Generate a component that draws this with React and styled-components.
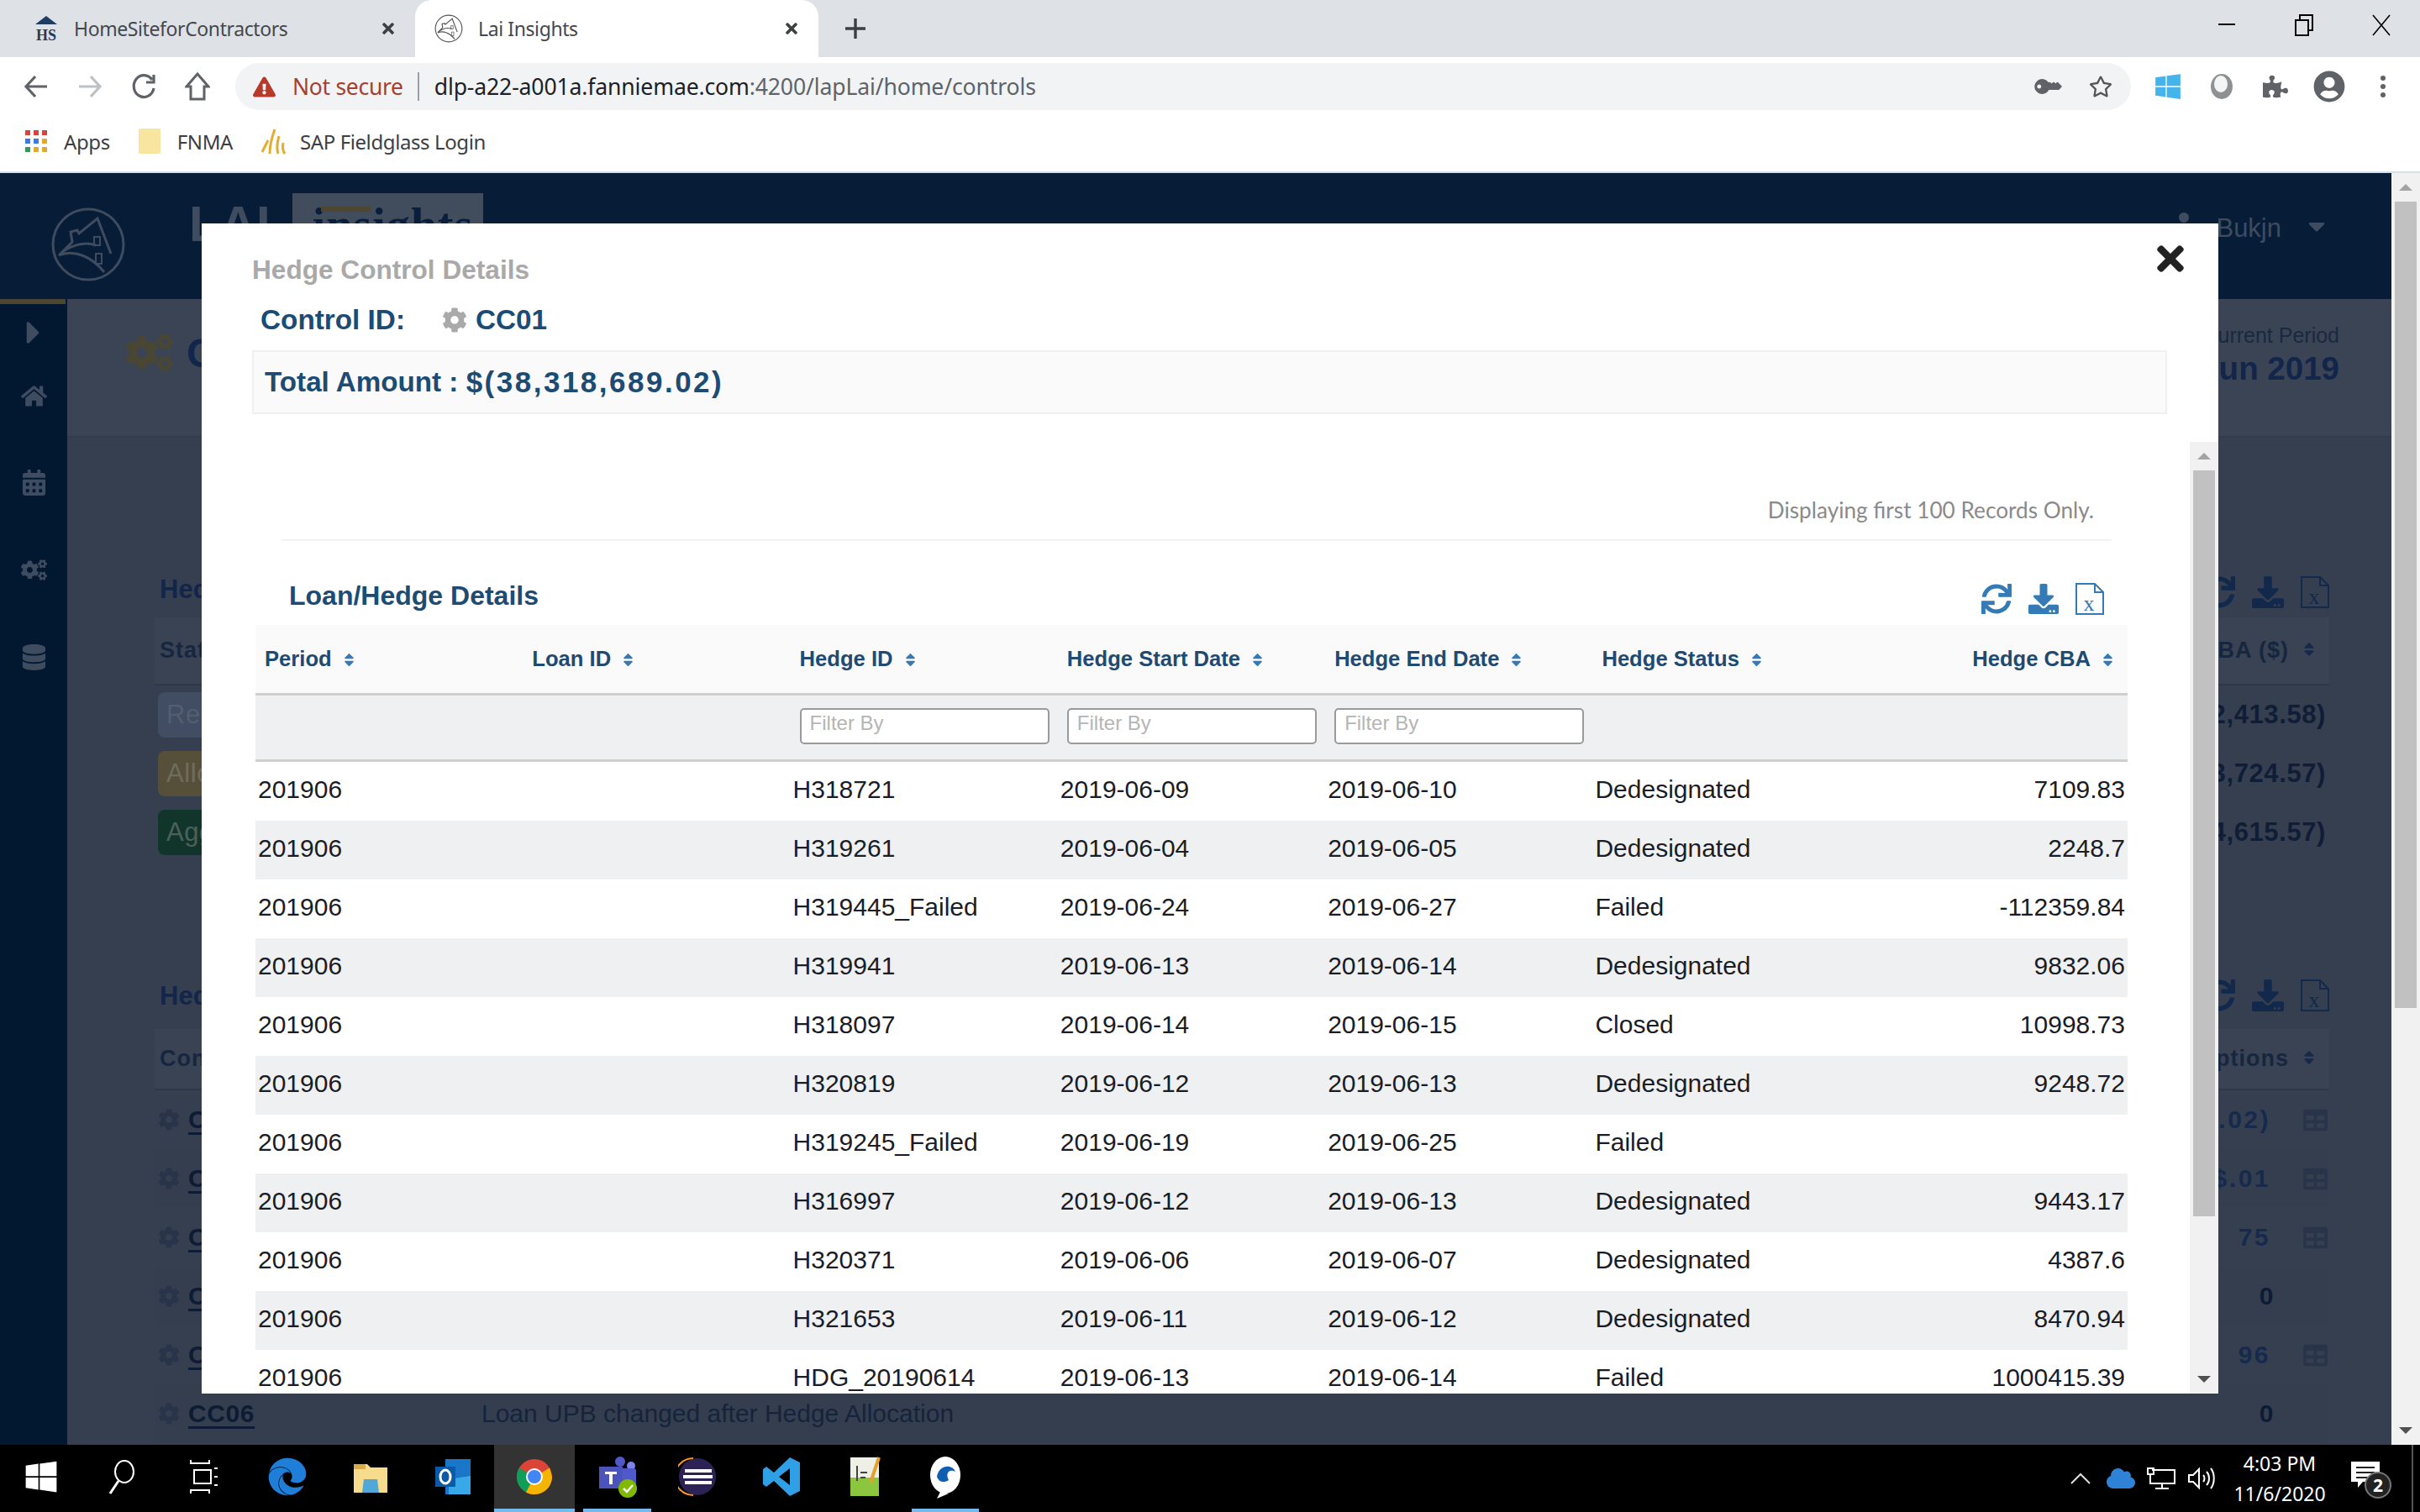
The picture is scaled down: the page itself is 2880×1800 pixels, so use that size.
import React from 'react';
import styled, { createGlobalStyle } from 'styled-components';
import {
  FaCalendarAlt,
  FaCaretDown,
  FaCaretRight,
  FaCloud,
  FaCog,
  FaCogs,
  FaDatabase,
  FaDownload,
  FaEdge,
  FaExclamationTriangle,
  FaHome,
  FaKey,
  FaPuzzlePiece,
  FaRegStar,
  FaSort,
  FaSync,
  FaTable,
  FaTimes,
  FaUser,
  FaUserCircle,
  FaWindows,
} from 'react-icons/fa';

const GlobalStyle = createGlobalStyle`
  html, body { margin: 0; padding: 0; background: #000; }
  * { box-sizing: border-box; }
  body { font-family: "Liberation Sans", Arial, sans-serif; }
`;

const Screen = styled.div`
  width: 2880px;
  height: 1800px;
  display: flex;
  flex-direction: column;
  overflow: hidden;
`;

/* browser chrome */
const TabStrip = styled.div`
  height: 68px;
  background: #dee1e6;
  display: flex;
  align-items: stretch;
  font-family: "Noto Sans", sans-serif;
`;

const Tab = styled.div`
  width: ${(p) => p.$width}px;
  padding: 0 22px 0 ${(p) => p.$pad}px;
  display: flex;
  align-items: center;
  gap: 18px;
  color: #45484d;
  font-size: 23px;
  background: ${(p) => (p.$active ? '#fff' : 'transparent')};
  border-radius: ${(p) => (p.$active ? '20px 20px 0 0' : '0')};
`;

const TabTitle = styled.span`
  flex: 1;
  letter-spacing: -0.4px;
  white-space: nowrap;
`;

const NewTab = styled.div`
  width: 88px;
  display: flex;
  align-items: center;
  justify-content: center;
  color: #3c4043;
`;

const WindowButtons = styled.div`
  margin-left: auto;
  display: flex;
`;

const WindowButton = styled.div`
  width: 92px;
  display: flex;
  justify-content: center;
  padding-top: 17px;
`;

const Toolbar = styled.div`
  height: 70px;
  padding-left: 11px;
  background: #fff;
  display: flex;
  align-items: center;
`;

const ToolButton = styled.div`
  width: 64px;
  height: 56px;
  display: flex;
  align-items: center;
  justify-content: center;
  flex: none;
  color: ${(p) => p.$color || '#5f6368'};
  font-size: ${(p) => p.$size || 30}px;
`;

const Omnibox = styled.div`
  width: 2256px;
  height: 56px;
  margin: 0 12px 0 13px;
  padding: 0 4px 0 21px;
  flex: none;
  background: #f1f3f4;
  border-radius: 28px;
  display: flex;
  align-items: center;
`;

const NotSecure = styled.span`
  margin-left: 20px;
  padding-right: 17px;
  border-right: 2px solid #9aa0a6;
  color: #a8402f;
  font-size: 26.5px;
  line-height: 34px;
  font-family: "Noto Sans", sans-serif;
  letter-spacing: -0.3px;
`;

const Url = styled.span`
  margin-left: 18px;
  flex: 1;
  font-size: 26.6px;
  font-family: "Noto Sans", sans-serif;
  letter-spacing: -0.15px;
  color: #5f6368;
  b { font-weight: 400; color: #202124; }
`;

const BookmarkBar = styled.div`
  height: 68px;
  padding: 0 0 6px 30px;
  background: #fff;
  border-bottom: 2px solid #d5dfe9;
  display: flex;
  align-items: center;
  font-family: "Noto Sans", sans-serif;
  font-size: 24px;
  letter-spacing: -0.4px;
  color: #3c4043;
`;

const Bookmark = styled.div`
  display: flex;
  align-items: center;
  gap: ${(p) => p.$gap}px;
  margin-right: ${(p) => p.$after}px;
`;

/* app behind the dialog */
const Main = styled.div`
  position: relative;
  flex: 1;
  min-height: 0;
  display: flex;
`;

const AppColumn = styled.div`
  flex: 1;
  min-width: 0;
  display: flex;
  flex-direction: column;
`;

const AppHeader = styled.header`
  height: 150px;
  flex: none;
  padding: 0 73px 0 60px;
  background: #071c36;
  display: flex;
  color: #3f4b5e;
`;

const Brand = styled.div`
  display: flex;
  align-items: flex-start;
  padding-top: 40px;
`;

const BrandName = styled.div`
  margin: -14px 0 0 75px;
  font-size: 60px;
  font-weight: 700;
  line-height: 70px;
`;

const BrandBox = styled.div`
  position: relative;
  width: 227px;
  height: 60px;
  margin: -16px 0 0 26px;
  padding-left: 24px;
  background: #414c5c;
  font-family: "Liberation Serif", serif;
  font-size: 56px;
  font-weight: 700;
  line-height: 76px;
  letter-spacing: 1px;
  color: #081f3b;
  &::before {
    content: '';
    position: absolute;
    left: 34px;
    top: 16px;
    width: 59px;
    height: 6px;
    background: #4d4732;
  }
`;

const UserMenu = styled.div`
  margin-left: auto;
  padding-top: 47px;
  display: flex;
  align-items: flex-start;
  gap: 26px;
  font-size: 31px;
  line-height: 38px;
`;

const Body = styled.div`
  flex: 1;
  min-height: 0;
  display: flex;
`;

const SideBar = styled.nav`
  width: 80px;
  flex: none;
  background: #021730;
  color: #3f4c60;
  display: flex;
  flex-direction: column;
  align-items: center;
  &::before {
    content: '';
    align-self: stretch;
    height: 6px;
    margin-right: 2px;
    background: #4d4732;
  }
`;

const SideItem = styled.div`
  height: ${(p) => p.$h || 104}px;
  margin-top: ${(p) => p.$top || 0}px;
  display: flex;
  align-items: center;
  justify-content: center;
  font-size: 31px;
`;

const Content = styled.main`
  flex: 1;
  min-width: 0;
  background: #353f50;
  overflow: hidden;
`;

const TitleBand = styled.div`
  height: 165px;
  padding: 0 62px 0 70px;
  background: #3a4455;
  border-bottom: 2px solid #323c4c;
  display: flex;
  justify-content: space-between;
  align-items: flex-start;
`;

const PageTitle = styled.div`
  margin-top: 36px;
  display: flex;
  align-items: center;
  gap: 16px;
  font-size: 48px;
  font-weight: 700;
  color: #11264a;
  svg { color: #4a4634; font-size: 56px; }
`;

const PeriodBox = styled.div`
  text-align: right;
  color: #1a2840;
  font-size: 25px;
  line-height: 30px;
  margin-top: 28px;
  strong { display: block; margin-top: 4px; color: #11264a; font-size: 38.5px; line-height: 42px; }
`;

const Section = styled.section`
  margin: ${(p) => p.$top}px 74px 0 104px;
`;

const SectionBar = styled.div`
  height: ${(p) => p.$h}px;
  display: flex;
  justify-content: space-between;
  align-items: flex-start;
`;

const SectionTitle = styled.h3`
  margin: 0 0 0 6px;
  padding-top: ${(p) => p.$pad}px;
  font-size: 31px;
  color: #13264a;
`;

const UnderIcons = styled.div`
  display: flex;
  align-items: center;
  gap: 20px;
  padding-top: 6px;
  color: #13294b;
  font-size: 38px;
`;

const UnderHead = styled.div`
  height: ${(p) => p.$h}px;
  padding: 0 14px 0 6px;
  background: #394354;
  border-bottom: 2px solid #2e3848;
  display: flex;
  align-items: center;
  justify-content: space-between;
  font-size: 27px;
  font-weight: 700;
  color: #17263f;
  letter-spacing: 1px;
  svg { margin-left: 14px; font-size: 20px; color: #17294a; }
`;

const StatusRow = styled.div`
  height: 70px;
  display: flex;
  align-items: center;
  justify-content: space-between;
  padding-right: 4px;
  font-size: 31px;
  font-weight: 700;
  letter-spacing: 0.6px;
  color: #101d36;
`;

const StatusChip = styled.span`
  width: 500px;
  height: 54px;
  margin-left: 4px;
  padding-left: 10px;
  border-radius: 8px;
  background: ${(p) => p.$bg};
  color: ${(p) => p.$fg};
  font-weight: 400;
  line-height: 54px;
`;

const ControlRow = styled.div`
  height: 70px;
  display: grid;
  grid-template-columns: 389px 1165px 1fr 64px;
  align-items: center;
  font-size: 30px;
  color: #16233c;
  background: ${(p) => (p.$even ? '#343e4f' : 'transparent')};
`;

const ControlId = styled.span`
  display: flex;
  align-items: center;
  gap: 10px;
  padding-left: 4px;
  font-weight: 700;
  letter-spacing: 0.6px;
  color: #0e1b34;
  svg { color: #29344a; font-size: 26px; }
  u { text-underline-offset: 5px; }
`;

const ControlValue = styled.span`
  text-align: right;
  font-weight: 700;
  letter-spacing: 2.5px;
  padding-right: ${(p) => (p.$zero ? 0 : 6)}px;
  color: ${(p) => (p.$zero ? '#0e1b34' : '#152a4c')};
`;

const GridIcon = styled.span`
  display: flex;
  justify-content: flex-end;
  padding-right: 2px;
  color: #29344a;
  font-size: 29px;
`;

const PageScroll = styled.div`
  width: 34px;
  flex: none;
  display: flex;
  flex-direction: column;
  align-items: center;
  background: #f1f1f1;
`;

const ScrollArrow = styled.div`
  height: 34px;
  flex: none;
  display: flex;
  align-items: center;
  justify-content: center;
  &::before {
    content: '';
    border-left: 8px solid transparent;
    border-right: 8px solid transparent;
    border-${(p) => (p.$down ? 'top' : 'bottom')}: 8px solid ${(p) => (p.$down ? '#505050' : '#a3a3a3')};
  }
`;

const ScrollThumb = styled.div`
  width: 26px;
  height: ${(p) => p.$h}px;
  flex: none;
  background: #c1c1c1;
`;

const ScrollRest = styled.div`
  flex: 1;
`;

/* dialog */
const Dialog = styled.div`
  position: absolute;
  left: 240px;
  top: 60px;
  width: 2400px;
  height: 1393px;
  background: #fff;
  display: flex;
  flex-direction: column;
  overflow: hidden;
`;

const CloseButton = styled.div`
  position: absolute;
  right: 34px;
  top: 19px;
  color: #222;
  font-size: 46px;
  line-height: 0;
`;

const DialogHead = styled.div`
  height: 260px;
  flex: none;
  padding: 37px 61px 0 60px;
`;

const DialogTitle = styled.h4`
  margin: 0;
  font-size: 31.6px;
  line-height: 36px;
  color: #a9a9a9;
`;

const ControlLine = styled.div`
  margin: 23px 0 0 10px;
  display: flex;
  align-items: center;
  font-size: 33.3px;
  line-height: 38px;
  font-weight: 700;
  color: #1c4b74;
`;

const ControlCode = styled.span`
  display: flex;
  align-items: center;
  gap: 10px;
  margin-left: 44px;
  svg { color: #a9a9a9; font-size: 30px; }
`;

const TotalBox = styled.div`
  height: 76px;
  margin-top: 17px;
  padding-left: 13px;
  background: #fafafa;
  border: 2px solid #f0f0f0;
  display: flex;
  align-items: center;
  font-size: 33.2px;
  font-weight: 700;
  color: #1c4b74;
  white-space: pre;
`;

const TotalValue = styled.span`
  font-size: 35px;
  letter-spacing: 2.5px;
`;

const ScrollPane = styled.div`
  flex: 1;
  min-height: 0;
  display: flex;
`;

const PaneContent = styled.div`
  flex: 1;
  min-width: 0;
  overflow: hidden;
`;

const RecordsNote = styled.div`
  height: 118px;
  margin-left: 95px;
  width: 2178px;
  padding: 64px 21px 0 0;
  border-bottom: 2px solid #f2f2f2;
  text-align: right;
  font-family: Lato, sans-serif;
  font-size: 26.2px;
  line-height: 34px;
  color: #8a8a8a;
`;

const TableBar = styled.div`
  height: 100px;
  padding: 46px 102px 0 104px;
  display: flex;
  justify-content: space-between;
  align-items: flex-start;
`;

const TableTitle = styled.h3`
  margin: 0;
  font-size: 32px;
  line-height: 38px;
  color: #1c4b74;
`;

const TableTools = styled.div`
  width: 146px;
  display: flex;
  align-items: center;
  justify-content: space-between;
  color: #337ab7;
  font-size: 36px;
  margin-top: 4px;
`;

const Table = styled.table`
  width: 2228px;
  margin-left: 64px;
  table-layout: fixed;
  border-collapse: separate;
  border-spacing: 0;
`;

const HeadCell = styled.th`
  height: 84px;
  padding: 0 ${(p) => (p.$right ? 14 : 0)}px 0 ${(p) => (p.$right ? 0 : 11)}px;
  background: #fafafa;
  border-bottom: 3px solid #cfcfcf;
  text-align: ${(p) => (p.$right ? 'right' : 'left')};
  font-size: 25.6px;
  font-weight: 700;
  color: #1f4a72;
  white-space: nowrap;
  svg { margin-left: 11px; font-size: 19px; color: #337ab7; vertical-align: -2px; }
`;

const FilterCell = styled.td`
  height: 79px;
  padding: 0 0 3px 11px;
  background: #eef0f1;
  border-bottom: 3px solid #cfcfcf;
  vertical-align: middle;
`;

const FilterInput = styled.input`
  display: block;
  width: 297px;
  height: 43px;
  padding: 0 0 8px 10px;
  border: 2px solid #9a9a9a;
  border-radius: 5px;
  background: #fff;
  font-family: "Liberation Sans", sans-serif;
  font-size: 24px;
  &::placeholder { color: #b5b5b5; opacity: 1; }
`;

const DataRow = styled.tr`
  background: ${(p) => (p.$striped ? '#eef0f1' : '#fff')};
`;

const DataCell = styled.td`
  height: 70px;
  padding: 0 ${(p) => (p.$right ? 3 : 0)}px 4px ${(p) => (p.$right ? 0 : 3)}px;
  text-align: ${(p) => (p.$right ? 'right' : 'left')};
  font-size: 30px;
  color: #1b1d26;
  white-space: nowrap;
`;

/* taskbar */
const Taskbar = styled.footer`
  height: 80px;
  flex: none;
  background: #000;
  display: flex;
  align-items: stretch;
  color: #fff;
`;

const TaskSlot = styled.div`
  width: ${(p) => p.$w}px;
  margin-left: ${(p) => p.$left || 0}px;
  flex: none;
  display: flex;
  align-items: center;
  justify-content: center;
  font-size: ${(p) => p.$size || 40}px;
  color: ${(p) => p.$color || '#fff'};
  background: ${(p) => (p.$current ? '#333' : 'transparent')};
  border-bottom: 4px solid ${(p) => (p.$running ? '#76b9ed' : 'transparent')};
`;

const Tray = styled.div`
  margin: 0 8px 0 auto;
  padding-right: 32px;
  display: flex;
  align-items: center;
  border-right: 2px solid #555;
`;

const TrayIcon = styled.div`
  width: 48px;
  display: flex;
  justify-content: center;
  color: ${(p) => p.$color || '#fff'};
  font-size: 34px;
`;

const Clock = styled.div`
  width: 130px;
  margin: 0 20px 0 4px;
  text-align: center;
  font-family: "Noto Sans", sans-serif;
  font-size: 23px;
  line-height: 36px;
`;

const Notice = styled.div`
  position: relative;
  width: 40px;
  height: 40px;
`;

const NoticeBadge = styled.span`
  position: absolute;
  left: 16px;
  top: 12px;
  width: 32px;
  height: 32px;
  border-radius: 50%;
  border: 2px solid #777;
  background: #222;
  font-family: "Noto Sans", sans-serif;
  font-size: 21px;
  font-weight: 700;
  line-height: 28px;
  text-align: center;
`;

const COLUMNS = ['Period', 'Loan ID', 'Hedge ID', 'Hedge Start Date', 'Hedge End Date', 'Hedge Status', 'Hedge CBA'];

const ROWS = [
  ['H318721', '2019-06-09', '2019-06-10', 'Dedesignated', '7109.83'],
  ['H319261', '2019-06-04', '2019-06-05', 'Dedesignated', '2248.7'],
  ['H319445_Failed', '2019-06-24', '2019-06-27', 'Failed', '-112359.84'],
  ['H319941', '2019-06-13', '2019-06-14', 'Dedesignated', '9832.06'],
  ['H318097', '2019-06-14', '2019-06-15', 'Closed', '10998.73'],
  ['H320819', '2019-06-12', '2019-06-13', 'Dedesignated', '9248.72'],
  ['H319245_Failed', '2019-06-19', '2019-06-25', 'Failed', ''],
  ['H316997', '2019-06-12', '2019-06-13', 'Dedesignated', '9443.17'],
  ['H320371', '2019-06-06', '2019-06-07', 'Dedesignated', '4387.6'],
  ['H321653', '2019-06-11', '2019-06-12', 'Dedesignated', '8470.94'],
  ['HDG_20190614', '2019-06-13', '2019-06-14', 'Failed', '1000415.39'],
];

const STATUSES = [
  ['Ready', '#414d62', '#535e70', '$(72,413.58)'],
  ['Allocated', '#56503a', '#6f6c5c', '$(3,724.57)'],
  ['Aggregated', '#12352b', '#4b6259', '$(4,615.57)'],
];

const CONTROLS = [
  ['CC01', '', '$(38,318,689.02)', true],
  ['CC02', '', '$.01', true],
  ['CC03', '', '75', true],
  ['CC04', '', '0', false],
  ['CC05', '', '96', true],
  ['CC06', 'Loan UPB changed after Hedge Allocation', '0', false],
];

function HouseLogo({ size, color }) {
  return (
    <svg width={size} height={size} viewBox="0 0 90 90" fill="none" stroke={color} strokeWidth="3">
      <circle cx="45" cy="45" r="42" />
      <path d="M10 58 L26 42 L24 30 L32 28 L34 32 L56 14 L72 56 M10 58 C28 50 50 60 64 78 M14 54 C28 44 44 42 54 46" />
      <path d="M52 36 h7 v10 h-7 z M54 56 h7 v12 h-7 z" strokeWidth="2" />
    </svg>
  );
}

function ExcelIcon({ color }) {
  return (
    <svg width="34" height="38" viewBox="0 0 34 38" fill="none" stroke={color} strokeWidth="2">
      <path d="M1 1 H23 L33 11 V37 H1 Z M23 1 V11 H33" />
      <text x="16" y="33" textAnchor="middle" fontFamily="Liberation Serif" fontSize="26" fill={color} stroke="none">
        x
      </text>
    </svg>
  );
}

function ChromeLogo() {
  return (
    <svg width="44" height="44" viewBox="0 0 44 44">
      <circle cx="22" cy="22" r="21" fill="#db4437" />
      <path d="M22 22 L3.8 11.5 A21 21 0 0 0 12 40.5 Z" fill="#0f9d58" />
      <path d="M22 22 L12 40.5 A21 21 0 0 0 43 22 L40.2 11.5 Z" fill="#f4b400" />
      <circle cx="22" cy="22" r="10" fill="#fff" />
      <circle cx="22" cy="22" r="8" fill="#4285f4" />
    </svg>
  );
}

function TaskApps() {
  return (
    <>
      <TaskSlot $w={97} $size={42} $color="#fff">
        <FaWindows />
      </TaskSlot>
      <TaskSlot $w={96}>
        <svg width="32" height="42" viewBox="0 0 32 42" fill="none" stroke="#fff" strokeWidth="2">
          <ellipse cx="19" cy="15" rx="11" ry="13" />
          <path d="M12 26 L2 41" strokeWidth="3" />
        </svg>
      </TaskSlot>
      <TaskSlot $w={99}>
        <svg width="36" height="44" viewBox="0 0 36 44" fill="none" stroke="#fff" strokeWidth="2">
          <path d="M2 2 V6 H24 V2 M6 14 H26 V30 H6 Z M2 42 V38 H24 V42 M30 12 H34 M30 22 H34 M30 32 H34" />
        </svg>
      </TaskSlot>
      <TaskSlot $w={100} $size={46} $color="#1f7fd8">
        <FaEdge />
      </TaskSlot>
      <TaskSlot $w={97}>
        <svg width="44" height="42" viewBox="0 0 44 42">
          <path d="M2 6 H18 L22 10 H42 V40 H2 Z" fill="#f6dc8c" />
          <path d="M14 24 H30 L32 40 H12 Z" fill="#4fa8d8" />
          <path d="M2 6 H16 V12 H2 Z" fill="#d9ac4a" />
        </svg>
      </TaskSlot>
      <TaskSlot $w={99}>
        <svg width="46" height="46" viewBox="0 0 46 46">
          <path d="M14 2 H44 V44 H14 Z" fill="#1a76c9" />
          <path d="M18 26 L44 22 V44 H18 Z" fill="#38a8e8" />
          <rect x="2" y="11" width="24" height="24" fill="#0a5aa8" />
          <ellipse cx="14" cy="23" rx="6" ry="8" fill="none" stroke="#fff" strokeWidth="3" />
        </svg>
      </TaskSlot>
      <TaskSlot $w={96} $current $running>
        <ChromeLogo />
      </TaskSlot>
      <TaskSlot $w={81} $left={10} $running>
        <svg width="52" height="52" viewBox="0 0 52 52">
          <circle cx="29" cy="8" r="6" fill="#5059c9" />
          <circle cx="42" cy="13" r="5" fill="#7b83eb" />
          <rect x="28" y="16" width="20" height="22" rx="3" fill="#5059c9" />
          <rect x="4" y="14" width="28" height="26" fill="#4b53bc" />
          <path d="M11 20 H25 V23 H20 V35 H16 V23 H11 Z" fill="#fff" />
          <circle cx="38" cy="40" r="11" fill="#7fba00" />
          <path d="M33 40 L37 44 L44 36" fill="none" stroke="#fff" strokeWidth="2.5" />
        </svg>
      </TaskSlot>
      <TaskSlot $w={110}>
        <svg width="46" height="46" viewBox="0 0 46 46">
          <circle cx="23" cy="23" r="22" fill="#2c2255" />
          <path d="M18 1 A22 22 0 0 0 18 45" fill="none" stroke="#f7941e" strokeWidth="2" />
          <rect x="8" y="14" width="32" height="4" fill="#fff" />
          <rect x="6" y="21" width="35" height="4" fill="#fff" />
          <rect x="8" y="28" width="32" height="4" fill="#fff" />
        </svg>
      </TaskSlot>
      <TaskSlot $w={90}>
        <svg width="46" height="48" viewBox="0 0 46 48">
          <path d="M33 1 L45 7 V41 L33 47 L14 29 L5 36 L1 33 V15 L5 12 L14 19 Z M33 14 L20 24 L33 34 Z" fill="#2f9fe6" fillRule="evenodd" />
        </svg>
      </TaskSlot>
      <TaskSlot $w={110}>
        <svg width="40" height="50" viewBox="0 0 40 50">
          <rect x="2" y="2" width="34" height="46" fill="#eef0e6" />
          <rect x="2" y="26" width="34" height="22" fill="#8cc63f" />
          <path d="M10 12 V30 M14 20 H22 M14 26 H20" stroke="#444" strokeWidth="2" />
          <path d="M36 2 L26 32" stroke="#e2a32d" strokeWidth="4" />
        </svg>
      </TaskSlot>
      <TaskSlot $w={80} $running>
        <svg width="40" height="52" viewBox="0 0 40 52">
          <ellipse cx="20" cy="24" rx="18" ry="22" fill="#fff" />
          <path d="M10 26 C12 12 28 10 32 20 C24 16 20 22 24 30 C18 34 12 32 10 26 Z" fill="#0f5fb0" />
          <path d="M14 44 L10 52 L24 46 Z" fill="#fff" />
        </svg>
      </TaskSlot>
    </>
  );
}

export default function App() {
  return (
    <Screen>
      <GlobalStyle />
      <TabStrip>
        <Tab $width={494} $pad={40}>
          <svg width="30" height="34" viewBox="0 0 30 34">
            <path d="M2 12 L15 2 L28 12 Z" fill="#1d3d63" />
            <text x="15" y="31" textAnchor="middle" fontFamily="Liberation Serif" fontWeight="700" fontSize="18" fill="#1d3d63">
              HS
            </text>
          </svg>
          <TabTitle>HomeSiteforContractors</TabTitle>
          <FaTimes color="#3c4043" size={20} />
        </Tab>
        <Tab $width={480} $pad={23} $active>
          <HouseLogo size={34} color="#555" />
          <TabTitle>Lai Insights</TabTitle>
          <FaTimes color="#3c4043" size={20} />
        </Tab>
        <NewTab>
          <svg width="26" height="26" viewBox="0 0 26 26" stroke="#3c4043" strokeWidth="3.4">
            <path d="M13 1 V25 M1 13 H25" />
          </svg>
        </NewTab>
        <WindowButtons>
          <WindowButton>
            <svg width="22" height="22" viewBox="0 0 22 22" stroke="#000" strokeWidth="2">
              <path d="M1 12 H21" />
            </svg>
          </WindowButton>
          <WindowButton>
            <svg width="22" height="26" viewBox="0 0 22 26" fill="none" stroke="#000" strokeWidth="2">
              <path d="M1 7 H16 V25 H1 Z M6 6 V1 H21 V19 H16" />
            </svg>
          </WindowButton>
          <WindowButton>
            <svg width="24" height="26" viewBox="0 0 24 26" stroke="#000" strokeWidth="1.6">
              <path d="M2 1 L22 25 M22 1 L2 25" />
            </svg>
          </WindowButton>
        </WindowButtons>
      </TabStrip>

      <Toolbar>
        <ToolButton>
          <svg width="30" height="30" viewBox="0 0 30 30" fill="none" stroke="currentColor" strokeWidth="3.2">
            <path d="M28 15 H3 M14 3 L3 15 L14 27" />
          </svg>
        </ToolButton>
        <ToolButton $color="#bdc1c6">
          <svg width="30" height="30" viewBox="0 0 30 30" fill="none" stroke="currentColor" strokeWidth="3.2">
            <path d="M2 15 H27 M16 3 L27 15 L16 27" />
          </svg>
        </ToolButton>
        <ToolButton>
          <svg width="30" height="32" viewBox="0 0 30 32" fill="none" stroke="currentColor" strokeWidth="3.2">
            <path d="M25 8 A12 13 0 1 0 27 18 M27 2 V11 H18" />
          </svg>
        </ToolButton>
        <ToolButton>
          <svg width="30" height="34" viewBox="0 0 30 34" fill="none" stroke="currentColor" strokeWidth="3">
            <path d="M15 2 L28 17 H23 V32 H7 V17 H2 Z" />
          </svg>
        </ToolButton>
        <Omnibox>
          <FaExclamationTriangle color="#b7392a" size={27} />
          <NotSecure>Not secure</NotSecure>
          <Url>
            <b>dlp-a22-a001a.fanniemae.com</b>:4200/lapLai/home/controls
          </Url>
          <ToolButton $size={26}>
            <FaKey style={{ transform: 'rotate(-135deg)' }} />
          </ToolButton>
          <ToolButton $size={28} $color="#555">
            <FaRegStar />
          </ToolButton>
        </Omnibox>
        <ToolButton $color="#45b4ec" $size={34}>
          <FaWindows />
        </ToolButton>
        <ToolButton>
          <svg width="28" height="32" viewBox="0 0 28 32">
            <ellipse cx="14" cy="16" rx="13" ry="15" fill="#8e9193" />
            <ellipse cx="13" cy="13" rx="8" ry="10" fill="#f4f4f4" />
          </svg>
        </ToolButton>
        <ToolButton $size={30}>
          <FaPuzzlePiece />
        </ToolButton>
        <ToolButton $size={38}>
          <FaUserCircle />
        </ToolButton>
        <ToolButton>
          <svg width="8" height="28" viewBox="0 0 8 28" fill="currentColor">
            <circle cx="4" cy="4" r="3" />
            <circle cx="4" cy="14" r="3" />
            <circle cx="4" cy="24" r="3" />
          </svg>
        </ToolButton>
      </Toolbar>

      <BookmarkBar>
        <Bookmark $gap={20} $after={34}>
          <svg width="26" height="26" viewBox="0 0 26 26">
            <path d="M0 0 h6 v6 h-6 z M10 0 h6 v6 h-6 z M20 0 h6 v6 h-6 z" fill="#d5453b" />
            <path d="M0 10 h6 v6 h-6 z" fill="#3b7bdc" />
            <path d="M10 10 h6 v6 h-6 z" fill="#3b7bdc" />
            <path d="M20 10 h6 v6 h-6 z" fill="#e0a92f" />
            <path d="M0 20 h6 v6 h-6 z" fill="#2f9d58" />
            <path d="M10 20 h6 v6 h-6 z M20 20 h6 v6 h-6 z" fill="#e0a92f" />
          </svg>
          Apps
        </Bookmark>
        <Bookmark $gap={20} $after={32}>
          <svg width="26" height="30" viewBox="0 0 26 30">
            <rect width="26" height="30" rx="2" fill="#f8e59f" />
          </svg>
          FNMA
        </Bookmark>
        <Bookmark $gap={14}>
          <svg width="34" height="34" viewBox="0 0 34 34" fill="none" stroke="#e5ad2d" strokeWidth="3">
            <path d="M3 30 C6 24 8 20 10 16 M12 32 C12 24 14 14 18 3 M22 32 C20 26 21 18 23 11 M30 32 C27 28 27 24 28 19" />
          </svg>
          SAP Fieldglass Login
        </Bookmark>
      </BookmarkBar>

      <Main>
        <AppColumn>
          <AppHeader>
            <Brand>
              <HouseLogo size={90} color="#3f4b5e" />
              <BrandName>LAI</BrandName>
              <BrandBox>insights</BrandBox>
            </Brand>
            <UserMenu>
              <FaUser size={24} />
              Bukjn
              <FaCaretDown size={32} />
            </UserMenu>
          </AppHeader>
          <Body>
            <SideBar>
              <SideItem $h={68}>
                <FaCaretRight size={44} />
              </SideItem>
              <SideItem $h={82}>
                <FaHome />
              </SideItem>
              <SideItem $top={10}>
                <FaCalendarAlt />
              </SideItem>
              <SideItem>
                <FaCogs />
              </SideItem>
              <SideItem>
                <FaDatabase />
              </SideItem>
            </SideBar>
            <Content>
              <TitleBand>
                <PageTitle>
                  <FaCogs />
                  Controls
                </PageTitle>
                <PeriodBox>
                  Current Period
                  <strong>Jun 2019</strong>
                </PeriodBox>
              </TitleBand>

              <Section $top={159}>
                <SectionBar $h={55}>
                  <SectionTitle $pad={4}>Hedge Status</SectionTitle>
                  <UnderIcons>
                    <FaSync />
                    <FaDownload />
                    <ExcelIcon color="#13294b" />
                  </UnderIcons>
                </SectionBar>
                <UnderHead $h={81}>
                  <span>Status</span>
                  <span>
                    CBA ($)
                    <FaSort />
                  </span>
                </UnderHead>
                {STATUSES.map(([label, bg, fg, amount]) => (
                  <StatusRow key={label}>
                    <StatusChip $bg={bg} $fg={fg}>
                      {label}
                    </StatusChip>
                    {amount}
                  </StatusRow>
                ))}
              </Section>

              <Section $top={134}>
                <SectionBar $h={65}>
                  <SectionTitle $pad={8}>Hedge Controls</SectionTitle>
                  <UnderIcons>
                    <FaSync />
                    <FaDownload />
                    <ExcelIcon color="#13294b" />
                  </UnderIcons>
                </SectionBar>
                <UnderHead $h={73}>
                  <span>Control ID</span>
                  <span>
                    Exceptions
                    <FaSort />
                  </span>
                </UnderHead>
                {CONTROLS.map(([id, desc, value, hasGrid], i) => (
                  <ControlRow key={id} $even={i % 2 === 1}>
                    <ControlId>
                      <FaCog />
                      <u>{id}</u>
                    </ControlId>
                    <span>{desc}</span>
                    <ControlValue $zero={!hasGrid}>{value}</ControlValue>
                    <GridIcon>{hasGrid && <FaTable />}</GridIcon>
                  </ControlRow>
                ))}
              </Section>
            </Content>
          </Body>
        </AppColumn>
        <PageScroll>
          <ScrollArrow />
          <ScrollThumb $h={960} />
          <ScrollRest />
          <ScrollArrow $down />
        </PageScroll>

        <Dialog>
          <CloseButton>
            <FaTimes />
          </CloseButton>
          <DialogHead>
            <DialogTitle>Hedge Control Details</DialogTitle>
            <ControlLine>
              Control ID:
              <ControlCode>
                <FaCog />
                CC01
              </ControlCode>
            </ControlLine>
            <TotalBox>
              Total Amount : <TotalValue>$(38,318,689.02)</TotalValue>
            </TotalBox>
          </DialogHead>
          <ScrollPane>
            <PaneContent>
              <RecordsNote>Displaying first 100 Records Only.</RecordsNote>
              <TableBar>
                <TableTitle>Loan/Hedge Details</TableTitle>
                <TableTools>
                  <FaSync />
                  <FaDownload />
                  <ExcelIcon color="#337ab7" />
                </TableTools>
              </TableBar>
              <Table>
                <thead>
                  <tr>
                    {COLUMNS.map((name, i) => (
                      <HeadCell key={name} $right={i === 6}>
                        {name}
                        <FaSort />
                      </HeadCell>
                    ))}
                  </tr>
                  <tr>
                    {COLUMNS.map((name, i) => (
                      <FilterCell key={name}>
                        {i >= 2 && i <= 4 && <FilterInput placeholder="Filter By" readOnly />}
                      </FilterCell>
                    ))}
                  </tr>
                </thead>
                <tbody>
                  {ROWS.map((row, i) => (
                    <DataRow key={row[0]} $striped={i % 2 === 1}>
                      <DataCell>201906</DataCell>
                      <DataCell />
                      <DataCell>{row[0]}</DataCell>
                      <DataCell>{row[1]}</DataCell>
                      <DataCell>{row[2]}</DataCell>
                      <DataCell>{row[3]}</DataCell>
                      <DataCell $right>{row[4]}</DataCell>
                    </DataRow>
                  ))}
                </tbody>
              </Table>
            </PaneContent>
            <PageScroll>
              <ScrollArrow />
              <ScrollThumb $h={888} />
              <ScrollRest />
              <ScrollArrow $down />
            </PageScroll>
          </ScrollPane>
        </Dialog>
      </Main>

      <Taskbar>
        <TaskApps />
        <Tray>
          <TrayIcon $color="#ddd">
            <svg width="24" height="14" viewBox="0 0 24 14" fill="none" stroke="currentColor" strokeWidth="2">
              <path d="M1 13 L12 2 L23 13" />
            </svg>
          </TrayIcon>
          <TrayIcon $color="#2e83d6">
            <FaCloud />
          </TrayIcon>
          <TrayIcon>
            <svg width="34" height="26" viewBox="0 0 34 26" fill="none" stroke="#fff" strokeWidth="2">
              <path d="M6 3 H33 V19 H8 M18 19 V25 M10 25 H26 M1 1 H8 V8 H1 Z M4 8 V19 H8" />
            </svg>
          </TrayIcon>
          <TrayIcon>
            <svg width="34" height="28" viewBox="0 0 34 28" fill="none" stroke="#fff" strokeWidth="2">
              <path d="M2 10 H7 L14 3 V25 L7 18 H2 Z M19 10 C21 12 21 16 19 18 M23 6 C27 10 27 18 23 22 M28 2 C33 8 33 20 28 26" />
            </svg>
          </TrayIcon>
          <Clock>
            4:03 PM
            <br />
            11/6/2020
          </Clock>
          <Notice>
            <svg width="34" height="32" viewBox="0 0 34 32">
              <path d="M0 0 H34 V24 H14 L8 31 V24 H0 Z" fill="#fff" />
              <path d="M6 7 H28 M6 13 H28 M6 19 H20" stroke="#222" strokeWidth="2" />
            </svg>
            <NoticeBadge>2</NoticeBadge>
          </Notice>
        </Tray>
      </Taskbar>
    </Screen>
  );
}
